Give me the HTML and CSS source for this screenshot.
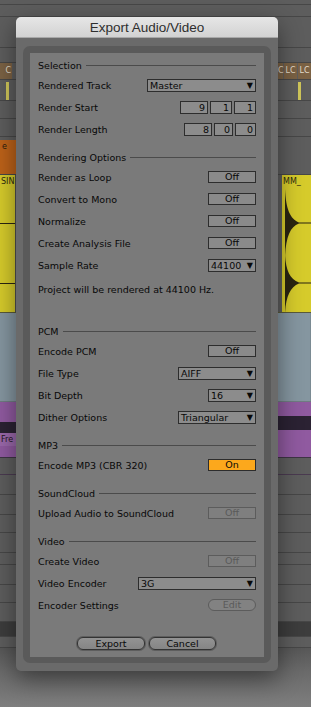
FILE: index.html
```html
<!DOCTYPE html>
<html lang="en">
<head>
    <meta charset="UTF-8">
    <meta name="viewport" content="width=device-width, initial-scale=1.0">
    <title>Export Audio/Video</title>
    <link rel="stylesheet" href="styles.css">
</head>
<body>

    <!-- arrangement behind the dialog -->
    <div class="arrangement">
        <div class="lane h4"></div>
        <div class="lane h11"></div>
        <div class="lane h30"></div>
        <div class="lane h14"></div>
        <div class="lane h16">
            <div class="clip lc-left">C</div>
            <div class="clip lc-right"><span class="w5">C</span><span>LC</span><span>LC</span></div>
        </div>
        <div class="lane h20">
            <div class="marker marker-left"></div>
            <div class="marker marker-right"></div>
        </div>
        <div class="lane h17"></div>
        <div class="lane h17"></div>
        <div class="lane h37">
            <div class="clip orange">e</div>
        </div>
        <div class="lane yellow-lane">
            <div class="clip yellow-left">
                <span class="clip-name">SIN</span>
                <div class="wave-line first"></div>
                <div class="wave-line second"></div>
            </div>
            <div class="clip yellow-right">
                <span class="clip-name">MM_</span>
                <svg class="wave" width="29" height="138" viewBox="0 0 29 138">
                    <path d="M3,14 C4,34 8,44 17,47.4 L29,47.6 L29,48.4 L17,48.6 C8,52 4,62 3,82 Z" fill="#2a2511"/>
                    <path d="M3,80 C4,96 8,104 17,107.4 L29,107.6 L29,108.4 L17,108.6 C8,112 4,122 3,138 Z" fill="#2a2511"/>
                </svg>
            </div>
        </div>
        <div class="lane blue-lane">
            <div class="clip blue-left"></div>
            <div class="clip blue-right"></div>
        </div>
        <div class="lane purple-lane">
            <div class="clip purple-left">
                <div class="purple-wave"></div>
                <span class="clip-name">Fre</span>
            </div>
            <div class="clip purple-right">
                <div class="purple-wave"></div>
            </div>
        </div>
        <div class="lane h19"></div>
        <div class="lane h19"></div>
        <div class="lane h17"></div>
        <div class="lane h19"></div>
        <div class="lane h11"></div>
        <div class="lane h19"></div>
        <div class="lane h17"></div>
        <div class="lane h18"></div>
        <div class="lane dark-band"></div>
        <div class="lane h10"></div>
        <div class="shade"></div>
    </div>

    <!-- the export dialog -->
    <div class="dialog">
        <div class="title-bar">Export Audio/Video</div>
        <div class="frame">
            <div class="panel">

                <div class="heading">Selection</div>
                <div class="row">
                    <span>Rendered Track</span>
                    <div class="select w109"><span>Master</span><span class="arrow">▼</span></div>
                </div>
                <div class="row">
                    <span>Render Start</span>
                    <div class="numbers">
                        <div class="num w28">9</div>
                        <div class="num w22">1</div>
                        <div class="num w22">1</div>
                    </div>
                </div>
                <div class="row">
                    <span>Render Length</span>
                    <div class="numbers">
                        <div class="num w28">8</div>
                        <div class="num w19">0</div>
                        <div class="num w21">0</div>
                    </div>
                </div>

                <div class="heading">Rendering Options</div>
                <div class="row">
                    <span>Render as Loop</span>
                    <div class="toggle">Off</div>
                </div>
                <div class="row">
                    <span>Convert to Mono</span>
                    <div class="toggle">Off</div>
                </div>
                <div class="row">
                    <span>Normalize</span>
                    <div class="toggle">Off</div>
                </div>
                <div class="row">
                    <span>Create Analysis File</span>
                    <div class="toggle">Off</div>
                </div>
                <div class="row">
                    <span>Sample Rate</span>
                    <div class="select w48"><span>44100</span><span class="arrow">▼</span></div>
                </div>
                <div class="row note">Project will be rendered at 44100 Hz.</div>

                <div class="heading spaced">PCM</div>
                <div class="row">
                    <span>Encode PCM</span>
                    <div class="toggle">Off</div>
                </div>
                <div class="row">
                    <span>File Type</span>
                    <div class="select w78"><span>AIFF</span><span class="arrow">▼</span></div>
                </div>
                <div class="row">
                    <span>Bit Depth</span>
                    <div class="select w48"><span>16</span><span class="arrow">▼</span></div>
                </div>
                <div class="row">
                    <span>Dither Options</span>
                    <div class="select w78"><span>Triangular</span><span class="arrow">▼</span></div>
                </div>

                <div class="heading">MP3</div>
                <div class="row">
                    <span>Encode MP3 (CBR 320)</span>
                    <div class="toggle on">On</div>
                </div>

                <div class="heading">SoundCloud</div>
                <div class="row">
                    <span>Upload Audio to SoundCloud</span>
                    <div class="toggle disabled">Off</div>
                </div>

                <div class="heading">Video</div>
                <div class="row">
                    <span>Create Video</span>
                    <div class="toggle disabled">Off</div>
                </div>
                <div class="row">
                    <span>Video Encoder</span>
                    <div class="select w118"><span>3G</span><span class="arrow">▼</span></div>
                </div>
                <div class="row">
                    <span>Encoder Settings</span>
                    <div class="pill disabled">Edit</div>
                </div>

                <div class="footer">
                    <div class="pill button w68">Export</div>
                    <div class="pill button w67">Cancel</div>
                </div>

            </div>
        </div>
    </div>

</body>
</html>
```

FILE: styles.css
```css
/* general page */
body {
    margin: 0;
    width: 311px;
    height: 707px;
    overflow: hidden;
    background: #5d5d5d;
    font-family: 'DejaVu Sans', sans-serif;
    position: relative;
}

/* arrangement in the background */
.arrangement {
    display: flex;
    flex-direction: column;
    height: 707px;
}

.lane {
    border-bottom: 1px solid #474747;
    display: flex;
    justify-content: space-between;
    position: relative;
    flex-shrink: 0;
}

.h4 { height: 4px; }
.h10 { height: 10px; }
.h11 { height: 11px; }
.h14 { height: 14px; }
.h16 { height: 16px; }
.h17 { height: 17px; }
.h18 { height: 18px; }
.h19 { height: 19px; }
.h20 { height: 20px; }
.h30 { height: 30px; }
.h37 { height: 37px; }

.clip {
    overflow: hidden;
    font-size: 8px;
    white-space: nowrap;
}

.lc-left {
    width: 12px;
    background: #7b6244;
    color: #e4dccb;
    text-align: right;
    line-height: 16px;
    padding-right: 1px;
    box-sizing: border-box;
}

.lc-right {
    margin-left: auto;
    width: 33px;
    display: flex;
    gap: 1px;
    color: #e4dccb;
    line-height: 16px;
}

.lc-right span {
    width: 13px;
    background: #7b6244;
    text-align: center;
}

.lc-right .w5 {
    width: 5px;
    text-align: right;
}

.marker {
    position: absolute;
    top: 2px;
    width: 3px;
    height: 18px;
    background: #cfc65a;
}

.marker-left { left: 6px; }
.marker-right { left: 298px; }

.orange {
    width: 16px;
    margin-top: 3px;
    background: #bd6219;
    color: #2a1a0c;
    line-height: 14px;
    padding-left: 2px;
    box-sizing: border-box;
}

.yellow-lane {
    height: 137px;
    border-bottom: 1px solid #5a5a3a;
}

.yellow-left {
    width: 16px;
    background: #d6cb2b;
    position: relative;
    border-right: 1px solid #4f4f4f;
    box-sizing: border-box;
}

.yellow-right {
    width: 29px;
    background: #d6cb2b;
    position: relative;
}

.clip-name {
    display: block;
    color: #2c2a10;
    line-height: 14px;
    padding-left: 1px;
}

.wave-line {
    position: absolute;
    left: 0;
    right: 0;
    height: 1px;
    background: #2a2511;
}

.wave-line.first { top: 48px; }
.wave-line.second { top: 108px; }

.wave {
    position: absolute;
    left: 0;
    top: 0;
}

.blue-lane {
    height: 88px;
    border-bottom: 1px solid #6f7c82;
}

.blue-left,
.blue-right {
    background: #8596a0;
    border-right: 1px solid #7a8a92;
}

.blue-left { width: 16px; }
.blue-right { width: 33px; }

.purple-lane {
    height: 72px;
    border-bottom: 1px solid #4a3a50;
}

.purple-left,
.purple-right {
    background: #905aa0;
    position: relative;
    border-bottom: 1px solid #3e3444;
    height: 55px;
}

.purple-left { width: 16px; }
.purple-right { width: 33px; }

.purple-wave {
    margin-top: 20px;
    height: 11px;
    background: #2b2233;
}

.purple-right .purple-wave {
    margin-top: 14px;
    height: 14px;
}

.purple-left .clip-name {
    color: #1d1420;
    background: #9a68aa;
    line-height: 13px;
}

.dark-band {
    height: 14px;
    background: #3d3d3d;
}

.shade {
    flex: 1;
    background: linear-gradient(#575757, #6a6a6a 40%, #7e7e7e);
}

/* the dialog */
.dialog {
    position: absolute;
    left: 16px;
    top: 17px;
    width: 262px;
    background: #6a6a6a;
    border-radius: 5px;
    box-shadow: 0 8px 24px rgba(0, 0, 0, 0.45);
    overflow: hidden;
}

.title-bar {
    height: 21px;
    background: linear-gradient(#e6e6e6, #d2d2d2);
    border-bottom: 1px solid #a8a8a8;
    box-sizing: border-box;
    text-align: center;
    font-family: 'Liberation Sans', sans-serif;
    font-size: 13.5px;
    line-height: 22px;
    color: #2e2e2e;
}

.frame {
    margin: 8px 7px 8px;
    padding: 7px 7px 6px;
    background: #5a5a5a;
    border-radius: 7px;
}

.panel {
    background: #7a7a7a;
    padding: 3px 8px 7px;
    font-size: 9.5px;
    color: #080808;
}

/* section headings with the line after them */
.heading {
    height: 18px;
    margin-top: 8px;
    display: flex;
    align-items: center;
    gap: 4px;
}

.heading:first-child {
    margin-top: 0;
}

.heading::after {
    content: "";
    flex: 1;
    height: 1px;
    background: #4b4b4b;
}

.heading.spaced {
    margin-top: 22px;
}

.row {
    height: 22px;
    display: flex;
    align-items: center;
    justify-content: space-between;
}

.row.note {
    margin-top: 2px;
}

/* controls */
.toggle {
    width: 48px;
    height: 12px;
    box-sizing: border-box;
    border: 1px solid #2d2d2d;
    background: #8a8a8a;
    text-align: center;
    line-height: 10px;
}

.toggle.on {
    background: #fca81c;
}

.toggle.disabled {
    border-color: #5c5c5c;
    background: #7f7f7f;
    color: #5a5a5a;
}

.select {
    height: 13px;
    box-sizing: border-box;
    border: 1px solid #2d2d2d;
    background: #8c8c8c;
    display: flex;
    justify-content: space-between;
    align-items: center;
    padding: 0 2px 0 2px;
    line-height: 11px;
}

.arrow {
    font-size: 8px;
}

.w48 { width: 48px; }
.w78 { width: 78px; }
.w109 { width: 109px; }
.w118 { width: 118px; }

.numbers {
    display: flex;
    gap: 2px;
}

.num {
    height: 13px;
    box-sizing: border-box;
    border: 1px solid #2d2d2d;
    background: #8c8c8c;
    text-align: right;
    padding-right: 2px;
    line-height: 11px;
}

.w19 { width: 19px; }
.w21 { width: 21px; }
.w22 { width: 22px; }
.w28 { width: 28px; }

.pill {
    width: 48px;
    height: 12px;
    box-sizing: border-box;
    border: 1px solid #5c5c5c;
    border-radius: 6px;
    background: #828282;
    color: #5a5a5a;
    text-align: center;
    line-height: 10px;
}

.footer {
    margin-top: 21px;
    display: flex;
    justify-content: center;
    gap: 4px;
    padding-right: 1px;
}

.pill.button {
    height: 13px;
    border: 1px solid #333;
    box-shadow: 0 0 0 1px #5e5e5e;
    background: linear-gradient(#939393, #858585);
    color: #080808;
    line-height: 11px;
}

.w67 { width: 67px; }
.w68 { width: 68px; }
```
